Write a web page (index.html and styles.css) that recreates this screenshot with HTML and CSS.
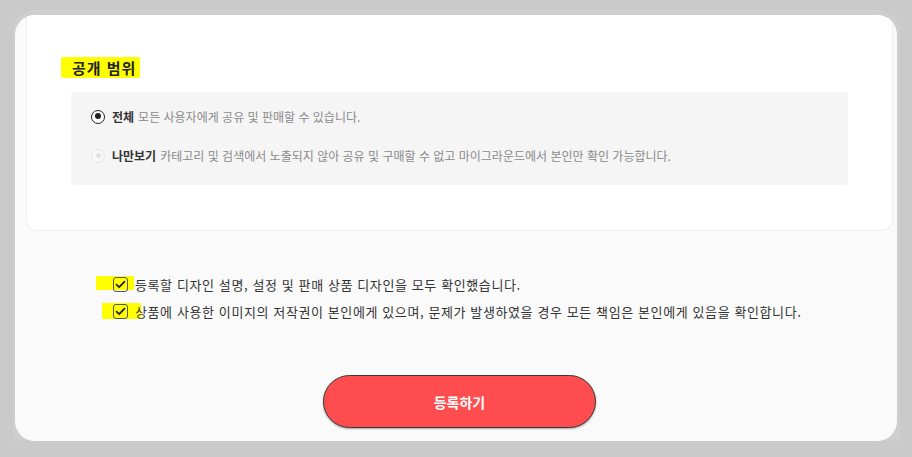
FILE: index.html
```html
<!DOCTYPE html>
<html lang="ko">
<head>
    <meta charset="UTF-8">
    <meta name="viewport" content="width=device-width, initial-scale=1.0">
    <title>디자인 등록</title>
    <link rel="stylesheet" href="styles.css">
</head>
<body>
    <div class="frame">
        <div class="panel">
            <div class="card">
                <h2 class="title"><span class="marker">공개 범위</span></h2>
                <div class="options">
                    <label class="option">
                        <span class="radio checked"></span>
                        <b>전체</b> 모든 사용자에게 공유 및 판매할 수 있습니다.
                    </label>
                    <label class="option">
                        <span class="radio disabled"></span>
                        <b>나만보기</b> 카테고리 및 검색에서 노출되지 않아 공유 및 구매할 수 없고 마이그라운드에서 본인만 확인 가능합니다.
                    </label>
                </div>
            </div>
            <div class="agree">
                <div class="agree-row">
                    <span class="hl hl-1"></span>
                    <span class="check">
                        <svg width="11" height="9" viewBox="0 0 11 9"><path d="M1.5 4.6 L4.2 7.2 L9.5 1.6" fill="none" stroke="#222" stroke-width="1.8" stroke-linecap="round" stroke-linejoin="round"/></svg>
                    </span>
                    <span class="agree-text">등록할 디자인 설명, 설정 및 판매 상품 디자인을 모두 확인했습니다.</span>
                </div>
                <div class="agree-row">
                    <span class="hl hl-2"></span>
                    <span class="check">
                        <svg width="11" height="9" viewBox="0 0 11 9"><path d="M1.5 4.6 L4.2 7.2 L9.5 1.6" fill="none" stroke="#222" stroke-width="1.8" stroke-linecap="round" stroke-linejoin="round"/></svg>
                    </span>
                    <span class="agree-text">상품에 사용한 이미지의 저작권이 본인에게 있으며, 문제가 발생하였을 경우 모든 책임은 본인에게 있음을 확인합니다.</span>
                </div>
            </div>
            <div class="actions">
                <button class="submit-button">등록하기</button>
            </div>
        </div>
    </div>
</body>
</html>
```

FILE: styles.css
```css
body {
    font-family: "Noto Sans CJK KR", "Noto Sans", sans-serif;
    background-color: #cacaca;
    margin: 0;
    width: 912px;
    height: 457px;
    overflow: hidden;
}
.frame {
    margin: 10px 12px 0 13px;
    padding: 5px 3px 0 2px;
    background-color: #cecece;
    border-radius: 22px 22px 0 0;
}
.panel {
    background-color: #fafafa;
    border-radius: 20px;
    height: 426px;
    padding: 0 5px 0 12px;
    overflow: hidden;
}
.card {
    background-color: #fff;
    border-radius: 0 0 10px 10px;
    box-shadow: 0 0 0 1px #f0f0f0;
    height: 215px;
    padding: 0 44px 0 44px;
    box-sizing: border-box;
    overflow: hidden;
}
.title {
    margin: 0;
    padding: 45px 0 0 0;
    font-size: 15px;
    font-weight: bold;
    color: #222;
    height: 32px;
    line-height: 16px;
}
.marker {
    background-color: #ffff00;
    padding: 0 4px 0 11px;
    margin-left: -10px;
    letter-spacing: 1px;
    border-radius: 2px;
}
.options {
    background-color: #f5f5f5;
    border-radius: 4px;
    height: 93px;
    padding: 16px 18px 0 20px;
    box-sizing: border-box;
}
.option {
    display: flex;
    align-items: center;
    font-size: 12px;
    color: #8a8a8a;
    height: 17px;
    margin-bottom: 22px;
    white-space: nowrap;
}
.option b {
    color: #333;
    margin-right: 4px;
}
.radio {
    width: 14px;
    height: 14px;
    border-radius: 50%;
    box-sizing: border-box;
    margin-right: 7px;
    position: relative;
}
.radio.checked {
    border: 1.5px solid #222;
    background-color: #fff;
}
.radio.checked::after {
    content: "";
    position: absolute;
    top: 2.5px;
    left: 2.5px;
    width: 6px;
    height: 6px;
    border-radius: 50%;
    background-color: #222;
}
.radio.disabled {
    border: 1px solid #e6e6e6;
    background-color: #f8f8f8;
}
.radio.disabled::after {
    content: "";
    position: absolute;
    top: 3.5px;
    left: 3.5px;
    width: 5px;
    height: 5px;
    border-radius: 50%;
    background-color: #e2e2e2;
}
.agree {
    padding: 45px 0 0 86px;
}
.agree-row {
    display: flex;
    align-items: center;
    height: 18px;
    margin-bottom: 9px;
    position: relative;
}
.hl {
    position: absolute;
    background-color: #ffff00;
}
.hl-1 {
    left: -17px;
    top: 1px;
    width: 38px;
    height: 14px;
}
.hl-2 {
    left: -11px;
    top: 1px;
    width: 39px;
    height: 16px;
}
.check {
    position: relative;
    width: 15px;
    height: 15px;
    border: 1.5px solid #555;
    border-radius: 3px;
    box-sizing: border-box;
    display: flex;
    align-items: center;
    justify-content: center;
    margin-right: 7px;
}
.agree-text {
    position: relative;
    font-size: 13px;
    letter-spacing: 0.6px;
    color: #333;
    white-space: nowrap;
}
.actions {
    display: flex;
    justify-content: center;
    padding: 46px 0 0 0;
}
.submit-button {
    width: 273px;
    height: 53px;
    background-color: #ff4c4f;
    color: #fff;
    border: 1px solid #3a3a3a;
    border-radius: 27px;
    box-shadow: 0 1px 2px rgba(0, 0, 0, 0.35);
    font-family: inherit;
    font-size: 14px;
    font-weight: bold;
    cursor: pointer;
}
```
